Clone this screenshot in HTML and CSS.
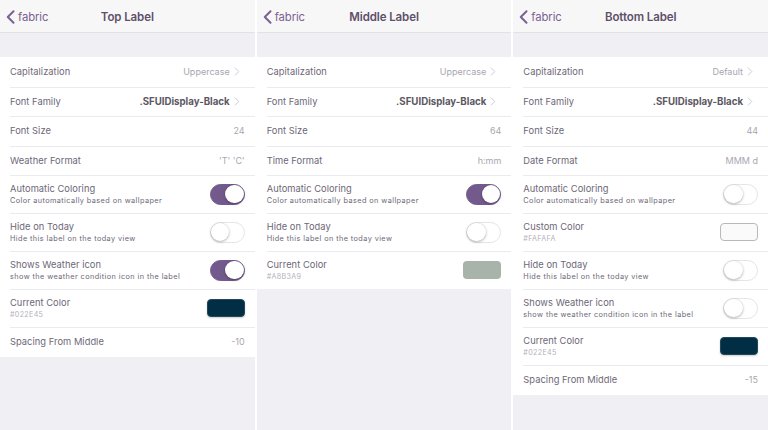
FILE: index.html
```html
<!DOCTYPE html>
<html>
<head>
<meta charset="utf-8">
<link rel="stylesheet" href="styles.css">
</head>
<body>
<div class="screens">

  <section class="panel">
    <header class="nav">
      <a class="back"><svg class="back-icon" viewBox="0 0 9 14"><path d="M7.5 1.2 L1.8 7 L7.5 12.8"/></svg>fabric</a>
      <h1 class="title">Top Label</h1>
    </header>
    <div class="gap"></div>
    <ul class="list">
      <li class="row"><span class="label">Capitalization</span><span class="value">Uppercase</span><svg class="chev" viewBox="0 0 6 10"><path d="M1 1 L5 5 L1 9"/></svg></li>
      <li class="row"><span class="label">Font Family</span><span class="value strong">.SFUIDisplay-Black</span><svg class="chev" viewBox="0 0 6 10"><path d="M1 1 L5 5 L1 9"/></svg></li>
      <li class="row"><span class="label">Font Size</span><span class="value">24</span></li>
      <li class="row"><span class="label">Weather Format</span><span class="value">'T' 'C'</span></li>
      <li class="row tall"><div class="text"><span class="label">Automatic Coloring</span><span class="sub">Color automatically based on wallpaper</span></div><span class="switch on"></span></li>
      <li class="row tall"><div class="text"><span class="label">Hide on Today</span><span class="sub">Hide this label on the today view</span></div><span class="switch"></span></li>
      <li class="row tall"><div class="text"><span class="label">Shows Weather icon</span><span class="sub">show the weather condition icon in the label</span></div><span class="switch on"></span></li>
      <li class="row tall"><div class="text"><span class="label">Current Color</span><span class="hex">#022E45</span></div><span class="swatch dark"></span></li>
      <li class="row"><span class="label">Spacing From Middle</span><span class="value">-10</span></li>
    </ul>
  </section>

  <section class="panel">
    <header class="nav">
      <a class="back"><svg class="back-icon" viewBox="0 0 9 14"><path d="M7.5 1.2 L1.8 7 L7.5 12.8"/></svg>fabric</a>
      <h1 class="title">Middle Label</h1>
    </header>
    <div class="gap"></div>
    <ul class="list">
      <li class="row"><span class="label">Capitalization</span><span class="value">Uppercase</span><svg class="chev" viewBox="0 0 6 10"><path d="M1 1 L5 5 L1 9"/></svg></li>
      <li class="row"><span class="label">Font Family</span><span class="value strong">.SFUIDisplay-Black</span><svg class="chev" viewBox="0 0 6 10"><path d="M1 1 L5 5 L1 9"/></svg></li>
      <li class="row"><span class="label">Font Size</span><span class="value">64</span></li>
      <li class="row"><span class="label">Time Format</span><span class="value">h:mm</span></li>
      <li class="row tall"><div class="text"><span class="label">Automatic Coloring</span><span class="sub">Color automatically based on wallpaper</span></div><span class="switch on"></span></li>
      <li class="row tall"><div class="text"><span class="label">Hide on Today</span><span class="sub">Hide this label on the today view</span></div><span class="switch"></span></li>
      <li class="row tall"><div class="text"><span class="label">Current Color</span><span class="hex">#A8B3A9</span></div><span class="swatch sage"></span></li>
    </ul>
  </section>

  <section class="panel">
    <header class="nav">
      <a class="back"><svg class="back-icon" viewBox="0 0 9 14"><path d="M7.5 1.2 L1.8 7 L7.5 12.8"/></svg>fabric</a>
      <h1 class="title">Bottom Label</h1>
    </header>
    <div class="gap"></div>
    <ul class="list">
      <li class="row"><span class="label">Capitalization</span><span class="value">Default</span><svg class="chev" viewBox="0 0 6 10"><path d="M1 1 L5 5 L1 9"/></svg></li>
      <li class="row"><span class="label">Font Family</span><span class="value strong">.SFUIDisplay-Black</span><svg class="chev" viewBox="0 0 6 10"><path d="M1 1 L5 5 L1 9"/></svg></li>
      <li class="row"><span class="label">Font Size</span><span class="value">44</span></li>
      <li class="row"><span class="label">Date Format</span><span class="value">MMM d</span></li>
      <li class="row tall"><div class="text"><span class="label">Automatic Coloring</span><span class="sub">Color automatically based on wallpaper</span></div><span class="switch"></span></li>
      <li class="row tall"><div class="text"><span class="label">Custom Color</span><span class="hex">#FAFAFA</span></div><span class="swatch light"></span></li>
      <li class="row tall"><div class="text"><span class="label">Hide on Today</span><span class="sub">Hide this label on the today view</span></div><span class="switch"></span></li>
      <li class="row tall"><div class="text"><span class="label">Shows Weather icon</span><span class="sub">show the weather condition icon in the label</span></div><span class="switch"></span></li>
      <li class="row tall"><div class="text"><span class="label">Current Color</span><span class="hex">#022E45</span></div><span class="swatch dark"></span></li>
      <li class="row"><span class="label">Spacing From Middle</span><span class="value">-15</span></li>
    </ul>
  </section>

</div>
</body>
</html>
```

FILE: styles.css
```css
* { box-sizing: border-box; }

html, body {
  margin: 0;
  padding: 0;
  background: #ffffff;
}

body {
  width: 768px;
  height: 430px;
  overflow: hidden;
  font-family: "Inter", "Noto Sans", sans-serif;
  -webkit-font-smoothing: antialiased;
}

.screens {
  display: flex;
  gap: 2px;
  height: 430px;
}

.panel {
  flex: 1;
  min-width: 0;
  background: #efeff4;
  display: flex;
  flex-direction: column;
}

.nav {
  height: 33px;
  background: #f7f7f8;
  border-bottom: 1px solid #e2e2e6;
  display: flex;
  align-items: center;
  justify-content: center;
  position: relative;
  padding-top: 2px;
}

.back {
  position: absolute;
  left: 6px;
  top: 1px;
  height: 32px;
  display: flex;
  align-items: center;
  gap: 3px;
  color: #7a6292;
  font-size: 11.3px;
  letter-spacing: -0.1px;
}

.back-icon {
  width: 9px;
  height: 14px;
  fill: none;
  stroke: #7a6292;
  stroke-width: 2;
  stroke-linecap: round;
  stroke-linejoin: round;
}

.title {
  margin: 0;
  font-size: 11.5px;
  font-weight: 600;
  color: #5f5069;
  letter-spacing: -0.1px;
}

.gap {
  height: 24px;
}

.list {
  list-style: none;
  margin: 0;
  padding: 0;
  background: #ffffff;
}

.row {
  height: 29.5px;
  padding: 0 10px;
  display: flex;
  align-items: center;
  position: relative;
}

.row.tall {
  height: 38px;
}

.row + .row::before {
  content: "";
  position: absolute;
  left: 10px;
  right: 0;
  top: 0;
  height: 1px;
  background: #ebebef;
}

.text {
  display: flex;
  flex-direction: column;
  gap: 1px;
  flex: 1;
  min-width: 0;
}

.label {
  flex: 1;
  font-size: 9.3px;
  color: #6d6777;
  letter-spacing: 0.05px;
  white-space: nowrap;
}

.text .label {
  flex: none;
  line-height: 12px;
}

.sub {
  font-size: 7.3px;
  color: #6d6777;
  line-height: 10px;
  letter-spacing: 0.42px;
  white-space: nowrap;
}

.hex {
  font-size: 7.2px;
  color: #b5b0bb;
  line-height: 10px;
  letter-spacing: 0.3px;
}

.value {
  font-size: 9px;
  color: #aaa6af;
  white-space: nowrap;
}

.value.strong {
  font-size: 9.7px;
  font-weight: 700;
  color: #5c5763;
}

.chev {
  width: 6px;
  height: 9px;
  margin-left: 4px;
  margin-right: 5px;
  fill: none;
  stroke: #cbcad0;
  stroke-width: 1.1;
  stroke-linecap: round;
  stroke-linejoin: round;
}

.switch {
  width: 35px;
  height: 21px;
  border-radius: 11px;
  background: #ffffff;
  border: 1.2px solid #e4e4e9;
  position: relative;
  flex: none;
}

.switch::after {
  content: "";
  position: absolute;
  top: 0px;
  left: 0px;
  width: 18.5px;
  height: 18.5px;
  border-radius: 50%;
  background: #ffffff;
  box-shadow: 0 1px 3px rgba(0, 0, 0, 0.28), 0 0 0 0.5px rgba(0, 0, 0, 0.06);
}

.switch.on {
  background: #735a8d;
  border-color: #735a8d;
}

.switch.on::after {
  left: auto;
  right: 0px;
}

.swatch {
  width: 38px;
  height: 18.5px;
  border-radius: 4px;
  flex: none;
}

.swatch.dark {
  background: #022e45;
  border: 1px solid #23485b;
  box-shadow: 0 1px 2px rgba(0, 0, 0, 0.2);
}

.swatch.sage {
  background: #a8b3a9;
}

.swatch.light {
  background: #fafafa;
  border: 1px solid #b9b8bd;
}
```
